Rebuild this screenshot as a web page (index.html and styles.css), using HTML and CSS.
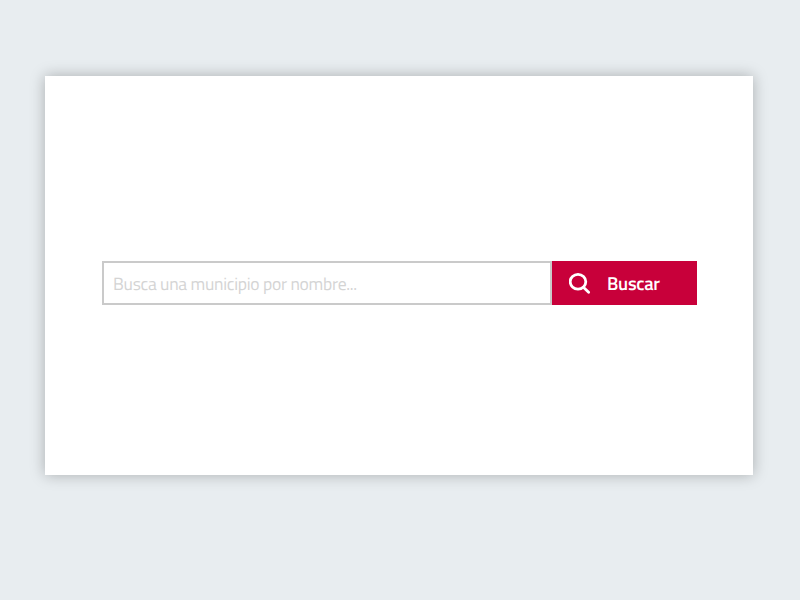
FILE: index.html
```html
<!DOCTYPE html>
<html lang="es">
<head>
<meta charset="utf-8">
<title>Buscar municipio</title>
<link rel="stylesheet" href="styles.css">
</head>
<body>
<main class="card">
  <form class="search">
    <input class="search-input" type="text" placeholder="Busca una municipio por nombre...">
    <button class="search-button" type="button">
      <svg class="search-icon" viewBox="0 0 22 22" width="22" height="22" aria-hidden="true">
        <ellipse cx="9" cy="9.7" rx="7.8" ry="7.4"/>
        <path d="M14.4 15.2L19.6 20.2"/>
      </svg>
      <span class="search-label">Buscar</span>
    </button>
  </form>
</main>
</body>
</html>
```
FILE: styles.css
```css
* { box-sizing: border-box; }

body {
  margin: 0;
  padding: 76px 47px 0 45px;
  height: 600px;
  background: #e8edf0;
  font-family: "Titillium Web", Roboto, sans-serif;
}

.card {
  height: 399px;
  padding: 185px 56px 0 57px;
  background: #fff;
  box-shadow: 0 0 14px rgba(0, 0, 0, 0.27);
}

.search {
  display: flex;
  height: 44px;
}

.search-input {
  flex: 1;
  min-width: 0;
  padding: 1px 9px 0;
  border: 2px solid #cacaca;
  border-radius: 0;
  outline: 0;
  background: #fff;
  font: 400 17.6px "Titillium Web", Roboto, sans-serif;
  letter-spacing: -0.27px;
  text-rendering: geometricPrecision;
}

.search-input::placeholder {
  color: #d4d4d4;
  opacity: 1;
}

.search-button {
  display: flex;
  align-items: center;
  gap: 16px;
  width: 145px;
  padding: 0 0 0 17px;
  border: 0;
  background: #c8003a;
  color: #fff;
  font: 600 18.6px "Titillium Web", Roboto, sans-serif;
  letter-spacing: -0.3px;
  text-rendering: geometricPrecision;
}

.search-icon {
  fill: none;
  stroke: #fff;
  stroke-width: 2.8;
  stroke-linecap: round;
}

.search-label {
  padding-top: 1px;
}
```
